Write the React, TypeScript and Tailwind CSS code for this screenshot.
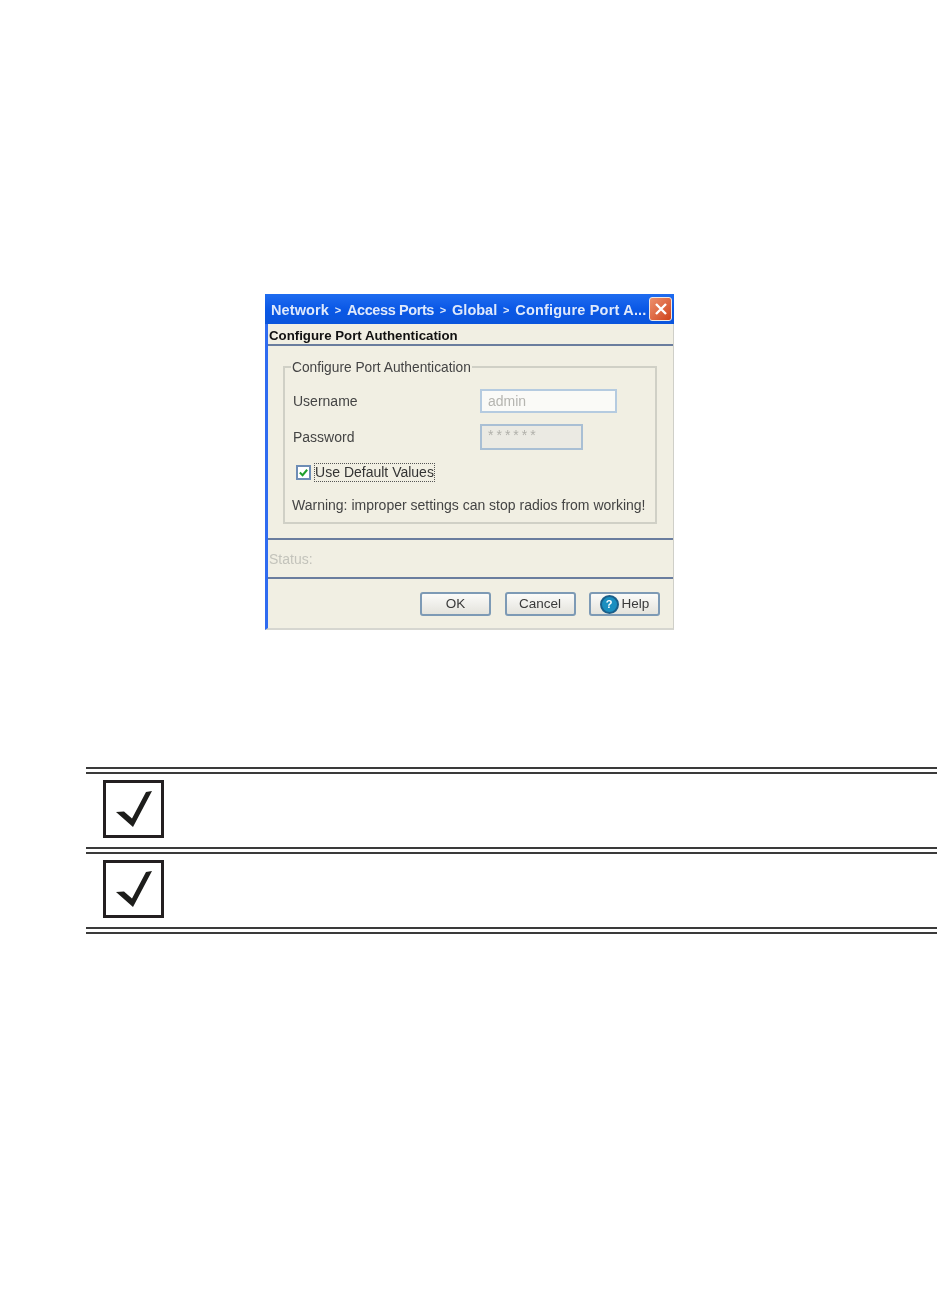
// App.tsx
import React from "react";

const CheckMark = () => (
  <svg viewBox="0 0 36 36" className="w-[36px] h-[36px]" aria-hidden="true">
    <path d="M0 21 L8 20.5 L16 27.5 L30 1 L36 0 L17 36 Z" fill="#1d1d1b" />
  </svg>
);

const DoubleRule = () => (
  <div className="h-[7px] border-y-2 border-[#3a3a3a]" />
);

const NoteRow = () => (
  <div className="h-[80px]">
    <DoubleRule />
    <div className="mt-[6px] ml-[17px] w-[61px] h-[58px] border-[3px] border-[#231f20] flex items-center justify-center">
      <CheckMark />
    </div>
  </div>
);

const DialogButton = ({ children }: { children: React.ReactNode }) => (
  <button className="w-[71px] h-[24px] rounded-[3px] border-2 border-[#7d9ab5] bg-gradient-to-b from-[#fbfbf9] to-[#e4e3dc] text-[13.5px] text-[#3a3a3a] flex items-center justify-center">
    {children}
  </button>
);

const Crumb = () => <span className="text-[11px]">&gt;</span>;

export default function App() {
  return (
    <div className="min-h-[1296px] bg-white pt-[294px] font-['Liberation_Sans',Arial,sans-serif] overflow-hidden">
      {/* Dialog */}
      <div className="ml-[265px] w-[409px] h-[336px] flex flex-col bg-[#f1efe3] border-l-[3px] border-l-[#2f6bf0] border-r border-r-[#cfcfc8] border-b-2 border-b-[#d6d6d0] blur-[0.6px]">
        <div className="h-[30px] shrink-0 -ml-[3px] -mr-px flex items-center justify-between pl-[6px] pr-[2px] pt-[3px] bg-gradient-to-b from-[#1f6cf0] via-[#0a58e6] to-[#0b55dc]">
          <span className="flex items-center gap-[5.8px] text-[14.5px] font-bold text-[#dfe9fb] whitespace-nowrap">
            <span className="tracking-[0.1px]">Network</span>
            <Crumb />
            <span className="tracking-[-0.4px]">Access Ports</span>
            <Crumb />
            <span>Global</span>
            <Crumb />
            <span className="tracking-[0.2px]">Configure Port A...</span>
          </span>
          <span className="w-[23px] h-[24px] -mt-[3px] rounded-[3px] border border-[#f1e9e2] bg-gradient-to-br from-[#ec8f6c] to-[#cf4216] flex items-center justify-center">
            <svg viewBox="0 0 14 14" className="w-[14px] h-[14px]" aria-hidden="true">
              <path d="M2 2 L12 12 M12 2 L2 12" stroke="#fff" strokeWidth="2.4" fill="none" />
            </svg>
          </span>
        </div>

        <div className="h-[22px] shrink-0 pl-px pt-[3px] border-b-2 border-b-[#6a7d9e] flex items-center text-[13.25px] font-bold text-[#111] whitespace-nowrap">
          Configure Port Authentication
        </div>

        <div className="pl-[15px] pr-[16px] pt-[13px]">
          <fieldset className="h-[165px] border-2 border-[#d0d0c6] pl-[8px] pr-[6px]">
            <legend className="-ml-[2px] px-px text-[13.75px] leading-[16px] text-[#444] translate-y-px">Configure Port Authentication</legend>
            <div className="flex items-center h-[24px] mt-[14px]">
              <span className="w-[187px] text-[14px] text-[#444]">Username</span>
              <div className="w-[137px] h-[24px] border-2 border-[#b5cbe0] bg-[#fafaf7] pl-[6px] flex items-center text-[14px] text-[#b5b5b0]">admin</div>
            </div>
            <div className="flex items-center h-[26px] mt-[11px]">
              <span className="w-[187px] text-[14px] text-[#444]">Password</span>
              <div className="w-[103px] h-[26px] border-2 border-[#a9bfd4] bg-[#ebeae3] pl-[6px] pb-[3px] flex items-center text-[14px] tracking-[3px] text-[#b0b0aa]">******</div>
            </div>
            <div className="flex items-center mt-[13px] pl-[3px] h-[19px]">
              <span className="w-[15px] h-[15px] border-2 border-[#6e8db5] bg-white flex items-center justify-center">
                <svg viewBox="0 0 12 12" className="w-[11px] h-[11px]" aria-hidden="true">
                  <path d="M2 6 L5 9 L10 3" stroke="#1fa02c" strokeWidth="2.2" fill="none" />
                </svg>
              </span>
              <span className="ml-[3px] h-[19px] w-[121px] border border-dotted border-[#555] flex items-center justify-center text-[14px] text-[#333] whitespace-nowrap">Use Default Values</span>
            </div>
            <div className="mt-[15px] -ml-px text-[14px] leading-[16px] text-[#444] whitespace-nowrap">
              Warning: improper settings can stop radios from working!
            </div>
          </fieldset>
        </div>

        <div className="mt-[14px] h-[41px] shrink-0 border-y-2 border-[#6a7d9e] flex items-center pl-px pt-[2px] text-[14px] text-[#c3c3bb]">
          Status:
        </div>

        <div className="flex-1 flex justify-end gap-[13.5px] pt-[13px] pr-[13px]">
          <DialogButton>OK</DialogButton>
          <DialogButton>Cancel</DialogButton>
          <DialogButton>
            <span className="w-[19px] h-[19px] rounded-full bg-[#1b8fc0] border-2 border-[#1a5f8a] text-white text-[11px] font-bold leading-none flex items-center justify-center mr-[3px]">?</span>
            Help
          </DialogButton>
        </div>
      </div>

      {/* Notes */}
      <div className="mt-[137px] ml-[86px]">
        <NoteRow />
        <NoteRow />
        <DoubleRule />
      </div>
    </div>
  );
}
